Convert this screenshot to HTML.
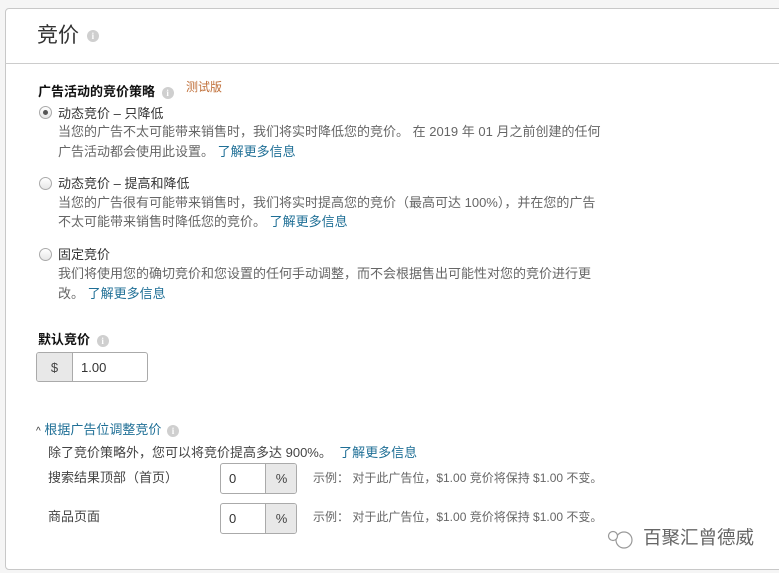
<!DOCTYPE html>
<html><head><meta charset="utf-8"><style>
body{margin:0;width:779px;height:573px;background:#f5f5f5;font-family:"Liberation Sans","Noto Sans CJK SC",sans-serif;position:relative;overflow:hidden;color:#333}
.card{position:absolute;left:5px;top:8px;width:800px;height:560px;background:#fff;border:1px solid #c8c8c8;border-radius:4px}
.hdr{position:absolute;left:5px;top:63px;width:800px;height:1px;background:#ccc}
.t{position:absolute;white-space:nowrap;line-height:1}
.info{display:inline-block;width:12px;height:12px;border-radius:50%;background:#cfcfcf;color:#fff;font-size:9px;text-align:center;line-height:12px;font-weight:bold;vertical-align:middle;font-family:"Liberation Serif",serif}
.d{color:#666;font-size:13px}
.a{color:#1f6f96}
.radio{position:absolute;width:11px;height:11px;border:1px solid #aaa;border-radius:50%;background:linear-gradient(#fff,#e6e6e6)}
.radio.on::after{content:"";position:absolute;left:3px;top:3px;width:5px;height:5px;border-radius:50%;background:#555}
.box{position:absolute;border:1px solid #aaa;border-radius:3px;background:#fff;overflow:hidden}
.box .g{position:absolute;top:0;bottom:0;background:#e8e8e8;font-size:13px;color:#444;display:flex;align-items:center;justify-content:center}
.box .v{position:absolute;top:0;bottom:0;display:flex;align-items:center;font-size:13px;color:#333}
</style></head><body>
<div class="card"></div><div class="hdr"></div>
<div class="t" style="left:37px;top:25px;font-size:21px;color:#333">竞价 <span class="info" style="margin-left:2px">i</span></div>
<div class="t" style="left:38px;top:85px;font-size:13px;font-weight:bold;color:#111">广告活动的竞价策略 <span class="info" style="margin-left:3px">i</span></div>
<div class="t" style="left:186px;top:81px;font-size:12px;color:#c0703a">测试版</div>

<div class="radio on" style="left:39px;top:106px"></div>
<div class="t" style="left:58px;top:107px;font-size:13px">动态竞价 – 只降低</div>
<div class="t d" style="left:58px;top:125px">当您的广告不太可能带来销售时，我们将实时降低您的竞价。 在 2019 年 01 月之前创建的任何</div>
<div class="t d" style="left:58px;top:145px">广告活动都会使用此设置。 <span class="a">了解更多信息</span></div>

<div class="radio" style="left:39px;top:177px"></div>
<div class="t" style="left:58px;top:177px;font-size:13px">动态竞价 – 提高和降低</div>
<div class="t d" style="left:58px;top:196px">当您的广告很有可能带来销售时，我们将实时提高您的竞价（最高可达 100%），并在您的广告</div>
<div class="t d" style="left:58px;top:215px">不太可能带来销售时降低您的竞价。 <span class="a">了解更多信息</span></div>

<div class="radio" style="left:39px;top:248px"></div>
<div class="t" style="left:58px;top:248px;font-size:13px">固定竞价</div>
<div class="t d" style="left:58px;top:267px">我们将使用您的确切竞价和您设置的任何手动调整，而不会根据售出可能性对您的竞价进行更</div>
<div class="t d" style="left:58px;top:287px">改。 <span class="a">了解更多信息</span></div>

<div class="t" style="left:38px;top:333px;font-size:13px;font-weight:bold;color:#111">默认竞价 <span class="info" style="margin-left:3px">i</span></div>
<div class="box" style="left:36px;top:352px;width:110px;height:28px"><div class="g" style="left:0;width:35px;border-right:1px solid #aaa">$</div><div class="v" style="left:44px">1.00</div></div>

<div class="t" style="left:36px;top:423px;font-size:13px"><span style="color:#333;font-size:10px">^</span> <span class="a">根据广告位调整竞价</span> <span class="info" style="margin-left:2px">i</span></div>
<div class="t" style="left:48px;top:446px;font-size:13px;color:#444">除了竞价策略外，您可以将竞价提高多达 900%。 &nbsp;<span class="a">了解更多信息</span></div>
<div class="t" style="left:48px;top:471px;font-size:13px;color:#444">搜索结果顶部（首页）</div>
<div class="box" style="left:220px;top:463px;width:75px;height:29px"><div class="v" style="left:8px">0</div><div class="g" style="left:44px;width:31px;border-left:1px solid #aaa">%</div></div>
<div class="t" style="left:313px;top:472px;font-size:12px;color:#666">示例： 对于此广告位，$1.00 竞价将保持 $1.00 不变。</div>
<div class="t" style="left:48px;top:510px;font-size:13px;color:#444">商品页面</div>
<div class="box" style="left:220px;top:503px;width:75px;height:29px"><div class="v" style="left:8px">0</div><div class="g" style="left:44px;width:31px;border-left:1px solid #aaa">%</div></div>
<div class="t" style="left:313px;top:511px;font-size:12px;color:#666">示例： 对于此广告位，$1.00 竞价将保持 $1.00 不变。</div>

<svg style="position:absolute;left:604px;top:527px" width="34" height="24" viewBox="0 0 34 24"><circle cx="20" cy="13" r="8" fill="none" stroke="#999" stroke-width="1.2"/><circle cx="9" cy="9" r="4.5" fill="#fff" stroke="#999" stroke-width="1.2"/></svg>
<div class="t" style="left:643px;top:529px;font-size:18.5px;color:#666">百聚汇曾德威</div>
</body></html>
